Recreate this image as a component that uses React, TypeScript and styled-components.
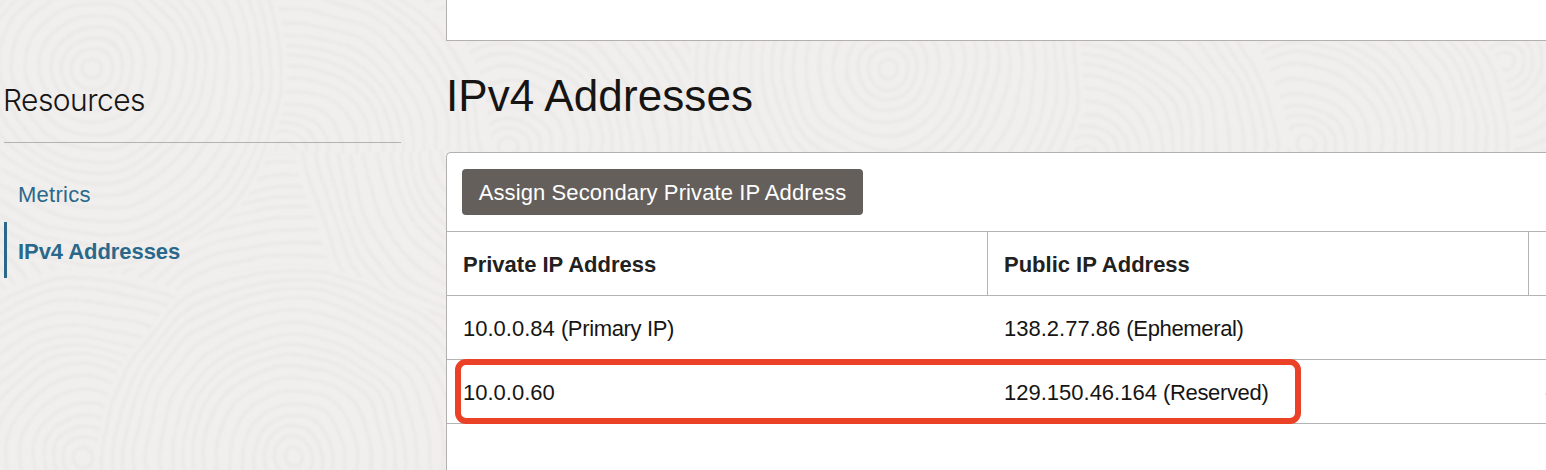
import React from "react";
import styled, { createGlobalStyle } from "styled-components";

const GlobalStyle = createGlobalStyle`
  html, body { margin: 0; padding: 0; background: #efeeec; overflow: hidden; }
  * { box-sizing: border-box; }
`;

const Page = styled.div`
  position: relative;
  display: flex;
  width: 100vw;
  height: 100vh;
  overflow: hidden;
  font-family: "Liberation Sans", Arial, sans-serif;
  font-size: 22px;
  color: #161513;
`;

const Texture = styled.svg`
  position: absolute;
  inset: 0;
  width: 100%;
  height: 100%;
`;

const Sidebar = styled.aside`
  position: relative;
  flex: none;
  width: 446px;
  padding: 80px 45px 0 4px;
`;

const SidebarTitle = styled.h2`
  margin: 0 0 36px;
  height: 63px;
  border-bottom: 1px solid #b3b2b0;
  font-family: Inter, "Liberation Sans", sans-serif;
  font-weight: 300;
  font-size: 30px;
  line-height: 40px;
  letter-spacing: -0.55px;
  text-indent: -1px;
`;

const SidebarLinks = styled.nav`
  display: flex;
  flex-direction: column;
  margin-top: -12px;
`;

const SidebarLink = styled.a<{ $active?: boolean; $track: number }>`
  height: ${(p) => (p.$active ? 56 : 55)}px;
  border-left: 3px solid ${(p) => (p.$active ? "#2a688b" : "transparent")};
  padding-left: 11px;
  line-height: ${(p) => (p.$active ? 60 : 55)}px;
  color: #2a688b;
  font-weight: ${(p) => (p.$active ? 700 : 400)};
  letter-spacing: ${(p) => p.$track}px;
  white-space: nowrap;
`;

const Content = styled.main`
  position: relative;
  flex: 1;
  min-width: 0;
  display: flex;
  flex-direction: column;
`;

const UpperPanel = styled.section`
  flex: none;
  height: 41px;
  background: #fff;
  border-left: 1px solid #b3b0ad;
  border-bottom: 1px solid #b3b0ad;
`;

const Heading = styled.h1`
  flex: none;
  margin: 0;
  height: 111px;
  line-height: 109px;
  font-weight: 400;
  font-size: 44px;
  letter-spacing: 0.1px;
  white-space: nowrap;
`;

const Panel = styled.section`
  flex: 1;
  background: #fff;
  border-left: 1px solid #b3b0ad;
  border-top: 1px solid #b3b0ad;
  border-top-left-radius: 5px;
  overflow: hidden;
`;

const Toolbar = styled.div`
  height: 79px;
  padding: 16px 15px;
  border-bottom: 1px solid #b4b3b1;
`;

const ActionButton = styled.button`
  display: block;
  width: 401px;
  height: 46px;
  padding: 2px 0 0;
  border: 0;
  border-radius: 4px;
  background: #655f5b;
  color: #fff;
  font: inherit;
  line-height: 44px;
  letter-spacing: 0.1px;
  white-space: nowrap;
`;

const Row = styled.div<{ $head?: boolean }>`
  position: relative;
  display: grid;
  grid-template-columns: 541px 541px 541px;
  height: 64px;
  border-bottom: 1px solid #b4b4b4;
  line-height: 65px;
  font-weight: ${(p) => (p.$head ? 700 : 400)};
  color: ${(p) => (p.$head ? "#222120" : "#161513")};
`;

const Cell = styled.div<{ $divided?: boolean }>`
  height: 63px;
  padding-left: 16px;
  border-right: 1px solid ${(p) => (p.$divided ? "#b4b4b4" : "transparent")};
  white-space: nowrap;
`;

const Kind = styled.span`
  letter-spacing: -0.35px;
`;

const Highlight = styled.div`
  position: absolute;
  left: 8px;
  top: -1px;
  width: 846px;
  height: 65px;
  border: 6px solid #eb4127;
  border-radius: 11px;
`;

type Swirl = { x: number; y: number; r: number; half?: boolean };

const TILE = 794;
const swirls: Swirl[] = [
  { x: 710, y: 60, r: 210 },
  { x: 650, y: 390, r: 230 },
  { x: 290, y: -150, r: 200 },
  { x: 295, y: 440, r: 290 },
  { x: 510, y: 145, r: 212 },
  { x: 290, y: 152, r: 205, half: true },
  { x: 92, y: 68, r: 198 },
  { x: 85, y: 455, r: 190 },
  { x: 295, y: 455, r: 198 },
];

const Rings = ({ x, y, r, half }: Swirl) => {
  const radii: number[] = [];
  for (let q = 8; q < r; q += 11.6) radii.push(q + Math.sin(q) * 1.8);
  const arc = (q: number) =>
    `M${x - q} ${y}A${q} ${q * 0.97} 0 0 1 ${x + q} ${y}` +
    (half ? "" : `A${q} ${q * 1.03} 0 0 1 ${x - q} ${y}`);
  return (
    <g>
      <path d={arc(r)} fill="#f0efed" />
      {radii.map((q) => (
        <path key={q} d={arc(q)} fill="none" stroke="#ebeae8" strokeWidth={3.6} />
      ))}
    </g>
  );
};

const Backdrop = () => (
  <Texture viewBox="0 0 1546 470" aria-hidden="true">
    <filter
      id="hand"
      x="0"
      y="0"
      width="1546"
      height="470"
      filterUnits="userSpaceOnUse"
      colorInterpolationFilters="sRGB"
    >
      <feTurbulence type="fractalNoise" baseFrequency="0.012" numOctaves={2} seed={4} result="n" />
      <feDisplacementMap
        in="SourceGraphic"
        in2="n"
        scale={15}
        xChannelSelector="R"
        yChannelSelector="G"
      />
      <feGaussianBlur stdDeviation={1.1} />
    </filter>
    <rect width="1546" height="470" fill="#efeeec" />
    <g filter="url(#hand)">
      {[-1, 0, 1].map((n) => (
        <g key={n} transform={`translate(${n * TILE} 0)`}>
          {swirls.map((s) => (
            <Rings key={`${s.x}-${s.y}`} {...s} />
          ))}
        </g>
      ))}
    </g>
  </Texture>
);

export default function App() {
  return (
    <Page>
      <GlobalStyle />
      <Backdrop />
      <Sidebar>
        <SidebarTitle>Resources</SidebarTitle>
        <SidebarLinks>
          <SidebarLink $track={0.25}>Metrics</SidebarLink>
          <SidebarLink $active $track={-0.06}>IPv4 Addresses</SidebarLink>
        </SidebarLinks>
      </Sidebar>
      <Content>
        <UpperPanel />
        <Heading>IPv4 Addresses</Heading>
        <Panel>
          <Toolbar>
            <ActionButton>Assign Secondary Private IP Address</ActionButton>
          </Toolbar>
          <Row $head>
            <Cell $divided>Private IP Address</Cell>
            <Cell $divided>Public IP Address</Cell>
            <Cell />
          </Row>
          <Row>
            <Cell>10.0.0.84 <Kind>(Primary IP)</Kind></Cell>
            <Cell>138.2.77.86 <Kind>(Ephemeral)</Kind></Cell>
            <Cell />
          </Row>
          <Row>
            <Cell>10.0.0.60</Cell>
            <Cell>129.150.46.164 <Kind>(Reserved)</Kind></Cell>
            <Cell>-</Cell>
            <Highlight />
          </Row>
        </Panel>
      </Content>
    </Page>
  );
}
